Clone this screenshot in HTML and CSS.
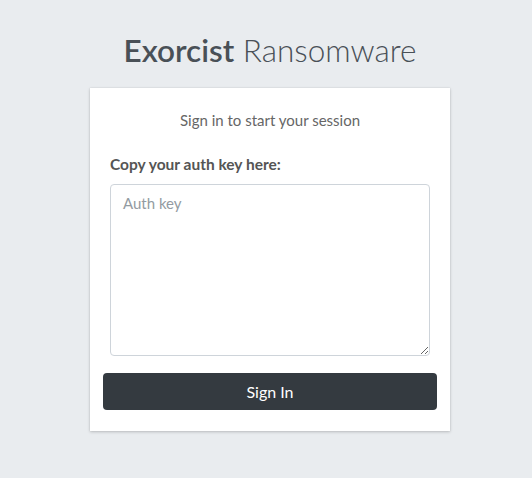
FILE: index.html
```html
<!DOCTYPE html>
<html lang="en">
<head>
    <meta charset="UTF-8">
    <meta name="viewport" content="width=device-width, initial-scale=1.0">
    <title>Exorcist Ransomware</title>
    <link rel="stylesheet" href="styles.css">
</head>
<body>
    <div class="login-box">
        <!-- Logo -->
        <div class="login-logo">
            <b>Exorcist</b> Ransomware
        </div>

        <!-- Card -->
        <div class="card">
            <p class="login-msg">Sign in to start your session</p>
            <form class="login-form">
                <div class="form-group">
                    <label for="authKey">Copy your auth key here:</label>
                    <textarea id="authKey" class="form-control" placeholder="Auth key"></textarea>
                </div>
                <button type="button" class="btn">Sign In</button>
            </form>
        </div>
    </div>
</body>
</html>
```

FILE: styles.css
```css
body, html {
    margin: 0;
    height: 100%;
}
body {
    background: #e9ecef;
    font-family: 'Lato', 'Noto Sans', sans-serif;
    color: #495057;
    display: flex;
    justify-content: center;
    padding-left: 8px;
    box-sizing: border-box;
}
.login-box {
    width: 360px;
    padding-top: 28px;
}
/* Logo */
.login-logo {
    text-align: center;
    font-size: 31.5px;
    font-weight: 300;
    line-height: 44px;
    margin-bottom: 16px;
    color: #495057;
}
.login-logo b {
    font-weight: 600;
}
/* Card */
.card {
    background: #fff;
    padding: 23px 13px 21px;
    box-shadow: 0 0 1px rgba(0, 0, 0, 0.125), 0 1px 3px rgba(0, 0, 0, 0.2);
}
.login-msg {
    margin: 0 0 26px;
    text-align: center;
    font-size: 15px;
    line-height: 18px;
    color: #666;
}
.form-group {
    padding: 0 7px;
    margin-bottom: 17px;
}
.form-group label {
    display: block;
    font-size: 15.5px;
    line-height: 18px;
    font-weight: 700;
    color: #555;
    margin-bottom: 11px;
}
.form-control {
    display: block;
    width: 100%;
    height: 172px;
    box-sizing: border-box;
    border: 1px solid #ced4da;
    border-radius: 4px;
    padding: 9px 12px;
    font-family: inherit;
    font-size: 15px;
    color: #495057;
    resize: vertical;
}
.form-control::placeholder {
    color: #939ba2;
}
.btn {
    display: block;
    width: 100%;
    height: 37px;
    border: none;
    border-radius: 4px;
    background: #343a40;
    color: #fff;
    font-family: inherit;
    font-size: 16px;
    cursor: pointer;
}
```
